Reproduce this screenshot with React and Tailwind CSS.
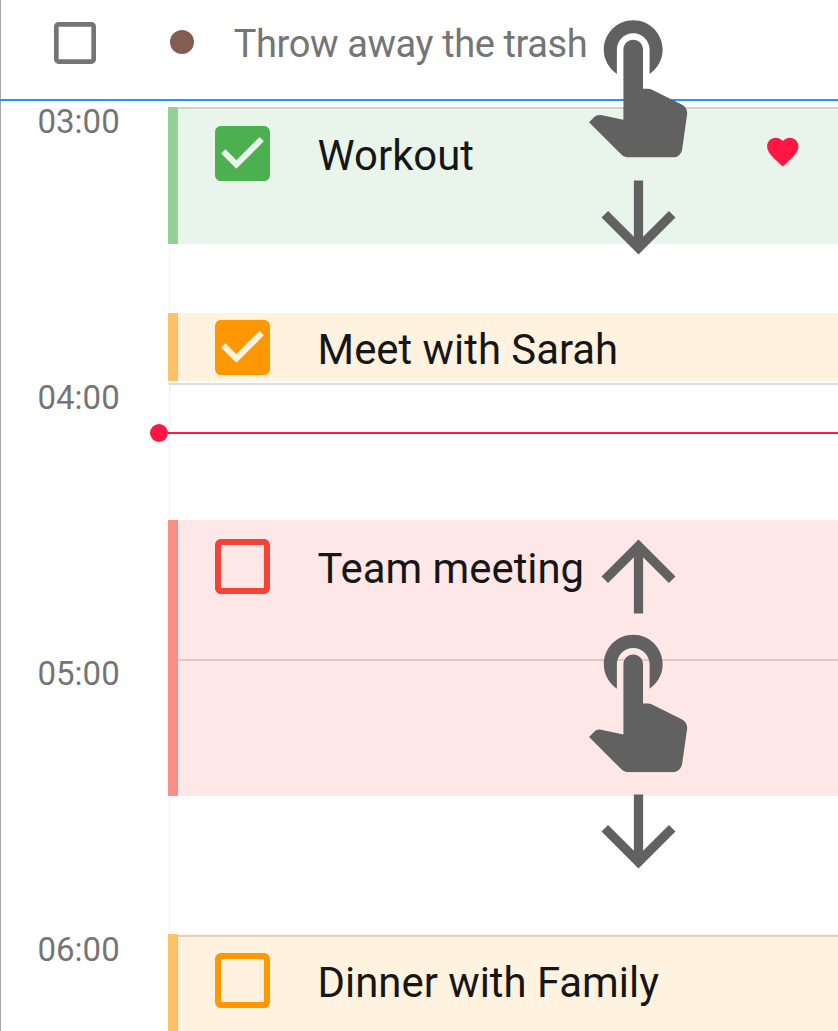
const HOURS = ["03:00", "04:00", "05:00", "06:00"];

function Icon({ path, className, viewBox = "0 0 24 24" }) {
  return (
    <svg viewBox={viewBox} fill="currentColor" className={className} aria-hidden="true">
      <path d={path} />
    </svg>
  );
}

const CHECKED =
  "M19 3H5c-1.11 0-2 .9-2 2v14c0 1.1.89 2 2 2h14c1.11 0 2-.9 2-2V5c0-1.1-.89-2-2-2zm-9 14l-5-5 1.41-1.41L10 14.17l7.59-7.59L19 8l-9 9z";
const UNCHECKED =
  "M19 5v14H5V5h14m0-2H5c-1.1 0-2 .9-2 2v14c0 1.1.9 2 2 2h14c1.1 0 2-.9 2-2V5c0-1.1-.9-2-2-2z";
const HEART =
  "M12 21.35l-1.45-1.32C5.4 15.36 2 12.28 2 8.5 2 5.42 4.42 3 7.5 3c1.74 0 3.41.81 4.5 2.09C13.09 3.81 14.76 3 16.5 3 19.58 3 22 5.42 22 8.5c0 3.78-3.4 6.86-8.55 11.54L12 21.35z";
const TOUCH =
  "M9 11.24V7.5C9 6.12 10.12 5 11.5 5S14 6.12 14 7.5v3.74c1.21-.81 2-2.18 2-3.74C16 5.01 13.99 3 11.5 3S7 5.01 7 7.5c0 1.56.79 2.93 2 3.74zm9.84 4.63l-4.54-2.26c-.17-.07-.35-.11-.54-.11H13v-6c0-.83-.67-1.5-1.5-1.5S10 6.67 10 7.5v10.74l-3.43-.72c-.08-.01-.15-.03-.24-.03-.31 0-.59.13-.79.33l-.79.8 4.94 4.94c.27.27.65.44 1.06.44h6.79c.75 0 1.33-.55 1.44-1.28l.75-5.27c.01-.07.02-.14.02-.2 0-.62-.38-1.16-.91-1.38z";
const DOWN = "M20 12l-1.41-1.41L13 16.17V4h-2v12.17l-5.58-5.59L4 12l8 8 8-8z";
const UP = "M4 12l1.41 1.41L11 7.83V20h2V7.83l5.58 5.59L20 12l-8-8-8 8z";

function Checkbox({ checked, className }) {
  return <Icon path={checked ? CHECKED : UNCHECKED} viewBox="3 3 18 18" className={`shrink-0 ${className}`} />;
}

function Event({ title, checked, favorite, box, tint }) {
  return (
    <article className={`flex items-start border-l-[10px] pl-[37.3px] ${box}`}>
      <Checkbox checked={checked} className={`size-[55px] ${tint}`} />
      <h2 className="ml-[47.3px] mt-[5px] text-[41.85px] leading-[50px] whitespace-nowrap text-[#161616]">{title}</h2>
      {favorite && <Icon path={HEART} className="mt-[7.5px] mr-[36.3px] ml-auto size-[37.6px] text-[#ff1744]" />}
    </article>
  );
}

export default function App() {
  return (
    <div className="relative flex h-[1031px] w-[838px] flex-col overflow-hidden bg-white font-['Roboto',sans-serif]">
      <div className="absolute inset-y-0 left-0 w-px bg-[#a5a5a5]" />

      <header className="relative flex h-[101px] shrink-0 items-start border-b-2 border-[#2196f3] pl-[54px]">
        <Checkbox className="mt-[22px] size-[42px] text-[#757575]" />
        <span className="mt-[30px] ml-[74px] size-6 rounded-full bg-[#815e51]" />
        <h1 className="mt-[20px] ml-[39.8px] text-[38px] leading-[48px] tracking-[-0.4px] whitespace-nowrap text-[#757575]">
          Throw away the trash
        </h1>
      </header>

      <main className="grid min-h-0 flex-1 grid-cols-[168px_minmax(0,1fr)]">
        <div className="col-start-1 row-start-1">
          {HOURS.map((hour) => (
            <div key={hour} className="h-[276px] pl-[37.5px] text-[33px] leading-[42px] text-[#757575]">
              {hour}
            </div>
          ))}
        </div>

        <div className="col-start-2 row-start-1 ml-px border-l border-[#f2f2f2]" />

        <section className="col-start-2 row-start-1 flex flex-col pt-[6px]">
          <Event title="Workout" checked favorite tint="text-[#4caf50]" box="h-[137px] border-[#94d097] bg-[#e9f5ea] pt-[18.5px]" />
          <Event title="Meet with Sarah" checked tint="text-[#ff9800]" box="mt-[69.4px] h-[68px] border-[#ffc166] bg-[#fff3e0] pt-[6.6px]" />
          <Event title="Team meeting" tint="text-[#f44336]" box="mt-[138.6px] h-[276px] border-[#f88e86] bg-[#fee8e7] pt-[19px]" />
          <Event title="Dinner with Family" tint="text-[#ff9800]" box="mt-[138px] h-[98px] border-[#ffc166] bg-[#fff3e0] pt-[19px]" />
        </section>

        <div className="pointer-events-none col-start-2 row-start-1 ml-[10px] overflow-hidden pt-[6px]">
          {HOURS.map((hour) => (
            <div key={hour} className="h-[276px] border-t-2 border-black/13" />
          ))}
        </div>
      </main>

      <div className="absolute top-[423.5px] left-[149.5px] flex w-[689px] items-center">
        <span className="size-[18.5px] rounded-full bg-[#ff1744]" />
        <span className="h-[2px] flex-1 bg-[#ff1744]" />
      </div>
      <div className="absolute top-[383px] left-[169px] h-[2px] w-[9px] bg-black/13" />

      <div className="pointer-events-none text-[#616161]">
        <Icon path={TOUCH} className="absolute top-0 left-[558px] size-[157px] translate-y-[0.5px]" />
        <Icon path={DOWN} className="absolute top-[161.5px] left-[582.5px] size-[111px]" />
        <Icon path={UP} className="absolute top-[520.6px] left-[582.5px] size-[111px]" />
        <Icon path={TOUCH} className="absolute top-[615px] left-[558px] size-[157px] translate-y-[0.2px]" />
        <Icon path={DOWN} className="absolute top-[775.5px] left-[582.5px] size-[111px]" />
      </div>
    </div>
  );
}
